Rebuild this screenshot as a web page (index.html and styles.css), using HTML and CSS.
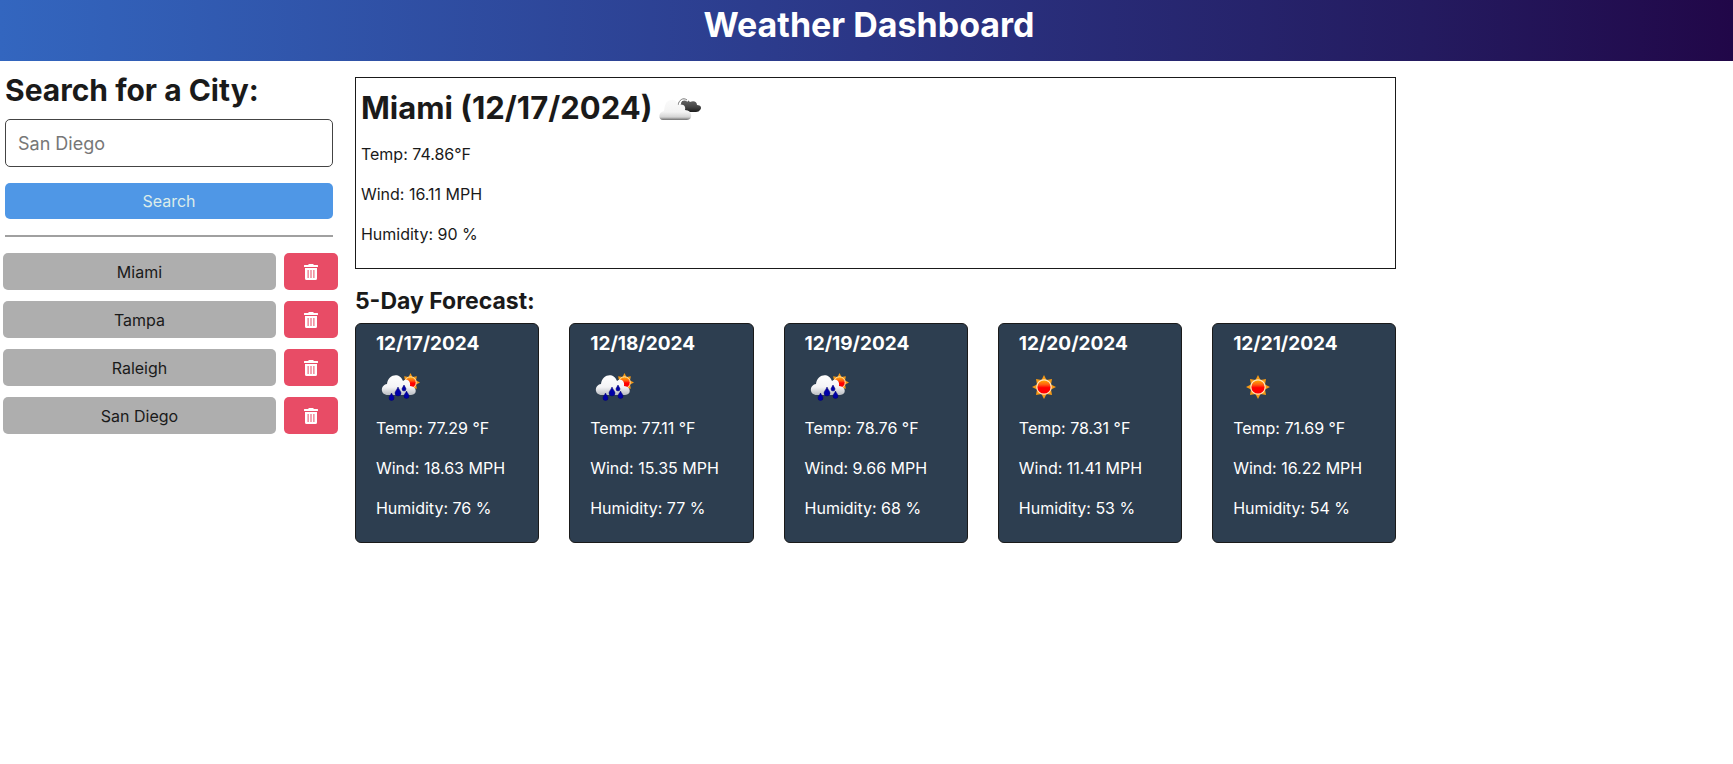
FILE: index.html
```html
<!DOCTYPE html>
<html lang="en">
<head>
<meta charset="utf-8">
<meta name="viewport" content="width=device-width, initial-scale=1">
<title>Weather Dashboard</title>
<link rel="stylesheet" href="styles.css">
</head>
<body>
<svg class="defs" aria-hidden="true">
  <defs>
    <linearGradient id="white-cloud" x1="0" y1="0" x2="0" y2="1">
      <stop offset="0" stop-color="#fafafa"/><stop offset=".6" stop-color="#f3f3f3"/><stop offset=".85" stop-color="#d4d4d4"/><stop offset="1" stop-color="#707070"/>
    </linearGradient>
    <linearGradient id="rain-cloud" x1="0" y1="0" x2="0" y2="1">
      <stop offset="0" stop-color="#fff"/><stop offset=".6" stop-color="#f4f4f6"/><stop offset="1" stop-color="#b9bcc2"/>
    </linearGradient>
    <linearGradient id="dark-cloud" x1="0" y1="0" x2="0" y2="1">
      <stop offset="0" stop-color="#686868"/><stop offset=".6" stop-color="#444"/><stop offset="1" stop-color="#1c1c1c"/>
    </linearGradient>
    <linearGradient id="sun-disc" x1="0" y1="0" x2="0" y2="1">
      <stop offset="0" stop-color="#ffb400"/><stop offset=".35" stop-color="#ff5a10"/><stop offset=".55" stop-color="#f00"/><stop offset="1" stop-color="#f00"/>
    </linearGradient>
    <symbol id="sun" viewBox="0 0 24 24">
      <path fill="#f79a14" d="M12 0 14.500 5 20 4 19 9.500 24 12 19 14.500 20 20 14.500 19 12 24 9.500 19 4 20 5 14.500 0 12 5 9.500 4 4 9.500 5Z"/>
      <circle cx="12" cy="12" r="7.200" fill="url(#sun-disc)" stroke="#ffe6bd" stroke-width="1.200"/>
    </symbol>
    <symbol id="broken-clouds" viewBox="0 0 50 50">
      <path fill="url(#dark-cloud)" d="M27 21C27 16 33 15 36 19C40 17 43 19 43 22C47 22 48 25 46 27Q45 29 42 29H31C26 29 24 25 27 21Z"/>
      <path fill="none" stroke="#fff" stroke-width="2" d="M23 23C25 17 30 15 34 18"/>
      <path fill="none" stroke="#777" stroke-width="1" d="M24 22C25 17 29 14 33 17"/>
      <path fill="url(#white-cloud)" d="M9 37C4 37 4 29 10 28C11 23 11 18 17 17Q22 16 24 22C30 20 32 24 31 27C39 27 39 37 33 37Z"/>
    </symbol>
    <symbol id="rain" viewBox="0 0 50 50">
      <use href="#sun" x="25" y="11" width="19" height="19"/>
      <path fill="url(#rain-cloud)" d="M12 33C4 33 4 23 11 22C12 12 24 10 27 19C31 16 35 19 34 24C41 24 42 33 35 33Z"/>
      <g fill="#0000a8" stroke="#00006e" stroke-width=".5">
        <path d="M22 25C23 28 25 29 25 31A3 3 0 0 1 19 31C19 29 21 28 22 25Z"/>
        <path d="M28 23C29 25 30 26 30 27A2 2 0 0 1 26 27C26 26 27 25 28 23Z"/>
        <path d="M15.500 31C16 33 18 34 18 36A2.500 2.500 0 0 1 13 36C13 34 15 33 15.500 31Z"/>
        <path d="M30.500 29C31 31 33 32 33 34A2.500 2.500 0 0 1 28 34C28 32 30 31 30.500 29Z"/>
      </g>
    </symbol>
    <symbol id="clear" viewBox="0 0 50 50">
      <use href="#sun" x="13" y="13" width="24" height="24"/>
    </symbol>
    <symbol id="trash" viewBox="0 0 14 16">
      <path fill="#fff" d="M.5 1H4L5 0H9L10 1H13.500Q14 1 14 1.500V2.500Q14 3 13.500 3H.5Q0 3 0 2.500V1.500Q0 1 .5 1Z"/>
      <path fill="#fff" fill-rule="evenodd" d="M1 4H13V14.500Q13 16 11.500 16H2.500Q1 16 1 14.500ZM3.600 6V14H4.600V6ZM6.500 6V14H7.500V6ZM9.400 6V14H10.400V6Z"/>
    </symbol>
  </defs>
</svg>

<header class="header"><h1 class="header-title">Weather Dashboard</h1></header>

<div class="dashboard">
  <aside class="sidebar">
    <form class="search">
      <h2 class="search-title"><label for="city">Search for a City:</label></h2>
      <input class="search-input" id="city" type="text" placeholder="San Diego">
      <button class="search-button" type="button">Search</button>
      <hr class="divider">
    </form>
    <ul class="history">
      <li class="history-item"><button class="city" type="button">Miami</button><button class="delete" type="button" aria-label="Delete Miami"><svg class="trash"><use href="#trash"/></svg></button></li>
      <li class="history-item"><button class="city" type="button">Tampa</button><button class="delete" type="button" aria-label="Delete Tampa"><svg class="trash"><use href="#trash"/></svg></button></li>
      <li class="history-item"><button class="city" type="button">Raleigh</button><button class="delete" type="button" aria-label="Delete Raleigh"><svg class="trash"><use href="#trash"/></svg></button></li>
      <li class="history-item"><button class="city" type="button">San Diego</button><button class="delete" type="button" aria-label="Delete San Diego"><svg class="trash"><use href="#trash"/></svg></button></li>
    </ul>
  </aside>

  <main class="weather">
    <section class="today">
      <h2 class="today-title">Miami (12/17/2024) <svg class="weather-icon"><use href="#broken-clouds"/></svg></h2>
      <p class="reading">Temp: 74.86°F</p>
      <p class="reading">Wind: 16.11 MPH</p>
      <p class="reading">Humidity: 90 %</p>
    </section>
    <h3 class="forecast-title">5-Day Forecast:</h3>
    <section class="forecast">
      <article class="card">
        <h4 class="card-date">12/17/2024</h4>
        <svg class="weather-icon"><use href="#rain"/></svg>
        <p class="reading">Temp: 77.29 °F</p><p class="reading">Wind: 18.63 MPH</p><p class="reading">Humidity: 76 %</p>
      </article>
      <article class="card">
        <h4 class="card-date">12/18/2024</h4>
        <svg class="weather-icon"><use href="#rain"/></svg>
        <p class="reading">Temp: 77.11 °F</p><p class="reading">Wind: 15.35 MPH</p><p class="reading">Humidity: 77 %</p>
      </article>
      <article class="card">
        <h4 class="card-date">12/19/2024</h4>
        <svg class="weather-icon"><use href="#rain"/></svg>
        <p class="reading">Temp: 78.76 °F</p><p class="reading">Wind: 9.66 MPH</p><p class="reading">Humidity: 68 %</p>
      </article>
      <article class="card">
        <h4 class="card-date">12/20/2024</h4>
        <svg class="weather-icon"><use href="#clear"/></svg>
        <p class="reading">Temp: 78.31 °F</p><p class="reading">Wind: 11.41 MPH</p><p class="reading">Humidity: 53 %</p>
      </article>
      <article class="card">
        <h4 class="card-date">12/21/2024</h4>
        <svg class="weather-icon"><use href="#clear"/></svg>
        <p class="reading">Temp: 71.69 °F</p><p class="reading">Wind: 16.22 MPH</p><p class="reading">Humidity: 54 %</p>
      </article>
    </section>
  </main>
</div>
</body>
</html>
```
FILE: styles.css
```css
* { box-sizing: border-box; }

body {
  margin: 0;
  background: #fff;
  color: #1a1a1a;
  font: 16px/24px Inter, "Liberation Sans", sans-serif;
}

h1, h2, h3, h4, p, ul { margin: 0; padding: 0; }
button, input { font: inherit; margin: 0; }
.defs { position: absolute; width: 0; height: 0; }

.header {
  padding: 5px 0 16px 5px;
  background: linear-gradient(to right, #3366bf, #2b3686 50%, #241b60 82%, #210748);
}
.header-title {
  color: #fff;
  font-size: 34px;
  line-height: 40px;
  font-weight: 700;
  text-align: center;
}

.dashboard {
  display: grid;
  grid-template-columns: 19.5% 60.1%;
  column-gap: 17px;
  padding-top: 10px;
}

.search { display: flex; flex-direction: column; padding: 0 5px; }
.search-title { font-size: 30px; line-height: 38px; font-weight: 700; }
.search-input {
  height: 48px;
  margin-top: 10px;
  padding: 0 12px;
  border: 1px solid #444;
  border-radius: 5px;
  background: #fff;
  color: #1a1a1a;
  font-size: 18px;
}
.search-input::placeholder { color: #777; opacity: 1; }
.search-button {
  height: 36px;
  margin-top: 16px;
  border: 0;
  border-radius: 5px;
  background: #4f97e6;
  color: #dcecea;
}
.divider { width: 100%; margin: 16px 0; border: 0; border-top: 2px solid #a0a0a0; }

.history { display: grid; gap: 11px; padding-left: 3px; list-style: none; }
.history-item { display: flex; gap: 8px; }
.city, .delete { height: 37px; border: 0; border-radius: 5px; }
.city { flex: 1; background: #aeaeae; color: #1a1a1a; }
.delete { display: grid; place-items: center; width: 54px; padding: 0; background: #e84c66; }
.trash { width: 14px; height: 16px; }

.today { margin-top: 6px; padding: 3px 5px 14px; border: 1px solid #1a1a1a; }
.today-title {
  display: flex;
  align-items: center;
  gap: 2px;
  height: 53px;
  font-size: 31px;
  font-weight: 700;
}
.weather-icon { display: block; width: 50px; height: 50px; }
.reading { padding: 8px 0; }

.forecast-title { margin: 18px 0 8px; font-size: 23px; line-height: 28px; font-weight: 700; }
.forecast { display: grid; grid-template-columns: repeat(5, 1fr); gap: 30px; }
.card {
  padding: 7px 20px 14px;
  border: 1px solid #1a1a1a;
  border-radius: 6px;
  background: #2d3e50;
  color: #fff;
}
.card-date { font-size: 19px; line-height: 26px; font-weight: 700; }
.card .weather-icon { margin: 5px 0 -4px; }
```
